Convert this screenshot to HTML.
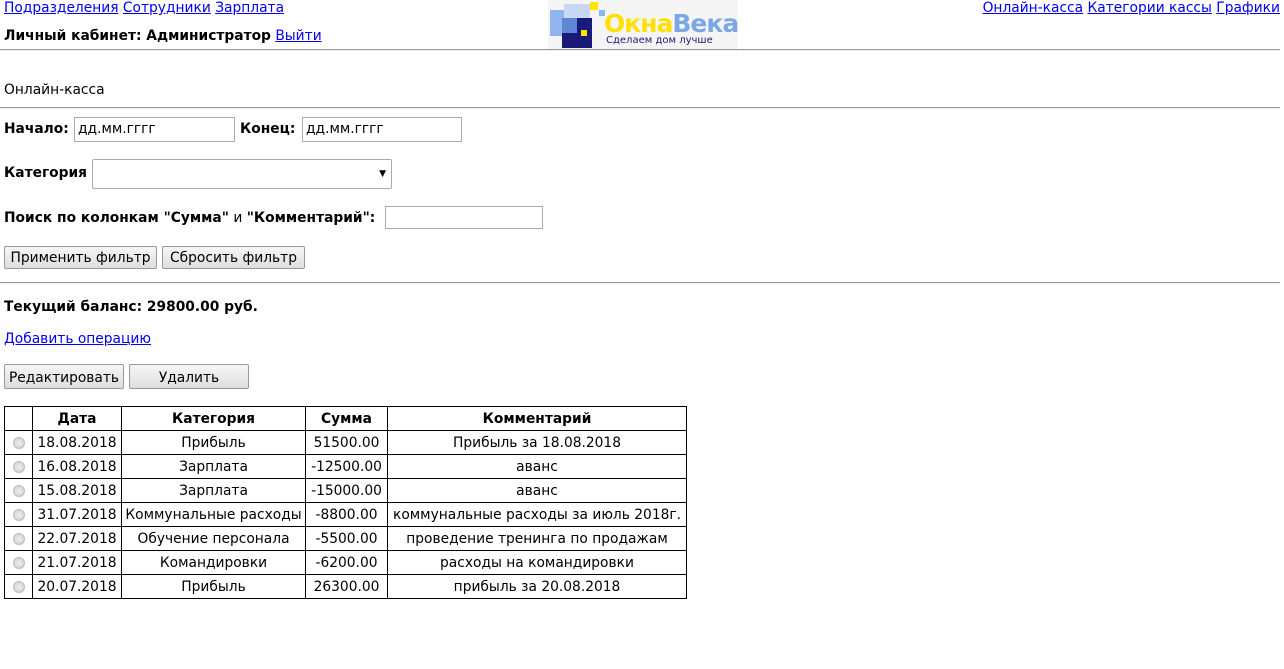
<!DOCTYPE html>
<html><head><meta charset="utf-8"><style>
*{box-sizing:border-box}
body{margin:0;width:1284px;height:669px;background:#fff;font-family:"DejaVu Sans","Liberation Sans",sans-serif;font-size:13.8px;color:#000;position:relative;overflow:hidden}
a{color:#00e;text-decoration:underline}
.abs{position:absolute;white-space:nowrap}
b{font-weight:bold}
hr{position:absolute;left:0;width:1280px;margin:0;border:0;border-top:1px solid #999;border-bottom:1px solid #eee;height:2px}
.inp{position:absolute;border:1px solid #aaa;background:#fff;font-size:13.8px;padding:2px 3px;height:25px;line-height:19px}
.btn{position:absolute;border:1px solid #999;background:linear-gradient(#f6f6f6,#dedede);border-radius:2px;height:23px;font-size:13.8px;text-align:center;line-height:22px}
table{position:absolute;left:4px;top:406px;border-collapse:collapse;table-layout:fixed;width:682px}
td,th{border:1px solid #000;height:24px;padding:0;text-align:center;font-size:13.8px;white-space:nowrap;overflow:hidden;line-height:22px}
th{font-weight:bold}
.r{display:inline-block;width:12px;height:12px;border-radius:50%;border:1px solid #bbb;background:radial-gradient(#eee,#ccc);vertical-align:middle}
</style></head><body>
<div class="abs" style="left:4px;top:0"><a>Подразделения</a> <a>Сотрудники</a> <a>Зарплата</a></div>
<div class="abs" style="left:4px;top:28px"><b>Личный кабинет: Администратор</b> <a>Выйти</a></div>
<div class="abs" style="right:4px;top:0"><a>Онлайн-касса</a> <a>Категории кассы</a> <a>Графики</a></div>
<div class="abs" style="left:548px;top:0;width:190px;height:50px;background:#f5f5f5">
<div style="position:absolute;left:2px;top:10px;width:28px;height:26px;background:#8fb4ee"></div>
<div style="position:absolute;left:16px;top:4px;width:26px;height:26px;background:#c9d8f5"></div>
<div style="position:absolute;left:14px;top:18px;width:30px;height:30px;background:#1a1a78"></div>
<div style="position:absolute;left:14px;top:18px;width:15px;height:15px;background:#5f85d6"></div>
<div style="position:absolute;left:33px;top:30px;width:6px;height:6px;background:#ffe600"></div>
<div style="position:absolute;left:42px;top:2px;width:8px;height:8px;background:#ffe600"></div>
<div style="position:absolute;left:51px;top:10px;width:6px;height:6px;background:#8fb4ee"></div>
<div style="position:absolute;left:56px;top:9px;font:bold 25px 'DejaVu Sans',sans-serif;color:#ffe000;letter-spacing:-1px">Окна<span style="color:#7ba6e8">Века</span></div>
<div style="position:absolute;left:58px;top:35px;font-size:10px;color:#1a1a78">Сделаем дом лучше</div>
</div>
<hr style="top:49px">
<div class="abs" style="left:4px;top:82px">Онлайн-касса</div>
<hr style="top:107px">
<div class="abs" style="left:4px;top:121px"><b>Начало:</b></div>
<div class="inp" style="left:74px;top:117px;width:161px">дд.мм.гггг</div>
<div class="abs" style="left:240px;top:121px"><b>Конец:</b></div>
<div class="inp" style="left:302px;top:117px;width:160px">дд.мм.гггг</div>
<div class="abs" style="left:4px;top:165px"><b>Категория</b></div>
<div class="inp" style="left:92px;top:159px;width:300px;height:30px;border-radius:2px"><span style="position:absolute;right:5px;top:5px;font-size:9px">▼</span></div>
<div class="abs" style="left:4px;top:210px"><b>Поиск по колонкам "Сумма"</b> и <b>"Комментарий":</b></div>
<div class="inp" style="left:385px;top:206px;width:158px;height:23px"></div>
<div class="btn" style="left:4px;top:246px;width:153px">Применить фильтр</div>
<div class="btn" style="left:162px;top:246px;width:143px">Сбросить фильтр</div>
<hr style="top:282px">
<div class="abs" style="left:4px;top:299px"><b>Текущий баланс: 29800.00 руб.</b></div>
<div class="abs" style="left:4px;top:331px"><a>Добавить операцию</a></div>
<div class="btn" style="left:4px;top:364px;width:120px;height:25px;line-height:26px">Редактировать</div>
<div class="btn" style="left:129px;top:364px;width:120px;height:25px;line-height:26px">Удалить</div>
<table>
<colgroup><col style="width:28px"><col style="width:89px"><col style="width:184px"><col style="width:82px"><col style="width:299px"></colgroup>
<tr><th></th><th>Дата</th><th>Категория</th><th>Сумма</th><th>Комментарий</th></tr>
<tr><td><span class="r"></span></td><td>18.08.2018</td><td>Прибыль</td><td>51500.00</td><td>Прибыль за 18.08.2018</td></tr>
<tr><td><span class="r"></span></td><td>16.08.2018</td><td>Зарплата</td><td>-12500.00</td><td>аванс</td></tr>
<tr><td><span class="r"></span></td><td>15.08.2018</td><td>Зарплата</td><td>-15000.00</td><td>аванс</td></tr>
<tr><td><span class="r"></span></td><td>31.07.2018</td><td>Коммунальные расходы</td><td>-8800.00</td><td>коммунальные расходы за июль 2018г.</td></tr>
<tr><td><span class="r"></span></td><td>22.07.2018</td><td>Обучение персонала</td><td>-5500.00</td><td>проведение тренинга по продажам</td></tr>
<tr><td><span class="r"></span></td><td>21.07.2018</td><td>Командировки</td><td>-6200.00</td><td>расходы на командировки</td></tr>
<tr><td><span class="r"></span></td><td>20.07.2018</td><td>Прибыль</td><td>26300.00</td><td>прибыль за 20.08.2018</td></tr>
</table>
</body></html>
